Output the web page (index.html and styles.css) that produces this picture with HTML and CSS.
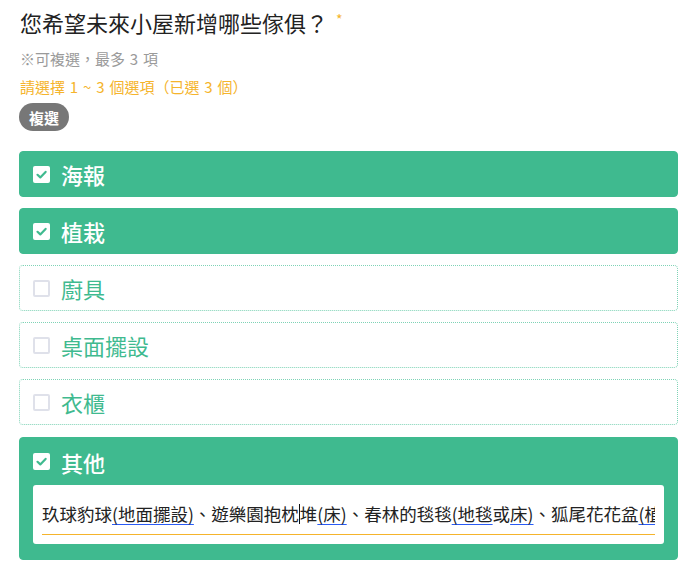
FILE: index.html
```html
<!DOCTYPE html>
<html lang="zh-Hant">
<head>
<meta charset="utf-8">
<link rel="stylesheet" href="styles.css">
</head>
<body>
<div class="question">
  <h1 class="title">您希望未來小屋新增哪些傢俱？<span class="req">*</span></h1>
  <p class="note">※可複選，最多 3 項</p>
  <p class="warn">請選擇 1 ~ 3 個選項（已選 3 個）</p>
  <span class="pill">複選</span>
  <div class="options">
    <div class="opt on">
      <span class="cb"><svg viewBox="0 0 17 17" width="17" height="17"><path d="M4.5 8.8 L7.3 11.4 L12.6 5.9" fill="none" stroke="#3fba8f" stroke-width="2.2" stroke-linecap="round" stroke-linejoin="round"/></svg></span>
      <span class="lbl">海報</span>
    </div>
    <div class="opt on">
      <span class="cb"><svg viewBox="0 0 17 17" width="17" height="17"><path d="M4.5 8.8 L7.3 11.4 L12.6 5.9" fill="none" stroke="#3fba8f" stroke-width="2.2" stroke-linecap="round" stroke-linejoin="round"/></svg></span>
      <span class="lbl">植栽</span>
    </div>
    <div class="opt">
      <span class="cb empty"></span>
      <span class="lbl">廚具</span>
    </div>
    <div class="opt">
      <span class="cb empty"></span>
      <span class="lbl">桌面擺設</span>
    </div>
    <div class="opt">
      <span class="cb empty"></span>
      <span class="lbl">衣櫃</span>
    </div>
    <div class="opt on other">
      <div class="opt-head">
        <span class="cb"><svg viewBox="0 0 17 17" width="17" height="17"><path d="M4.5 8.8 L7.3 11.4 L12.6 5.9" fill="none" stroke="#3fba8f" stroke-width="2.2" stroke-linecap="round" stroke-linejoin="round"/></svg></span>
        <span class="lbl">其他</span>
      </div>
      <div class="input-wrap">
        <div class="input"><span class="txt">玖球豹球<u>(地面擺設)</u>、遊樂園抱枕<span class="caret"></span>堆<u>(床)</u>、春林的毯毯<u>(地毯</u>或<u>床)</u>、狐尾花花盆<u>(植栽)</u></span></div>
      </div>
    </div>
  </div>
</div>
</body>
</html>
```
FILE: styles.css
```css
* { box-sizing: border-box; }
html, body { margin: 0; background: #fff; }
body {
  font-family: "Noto Sans CJK TC", "Noto Sans", sans-serif;
  padding: 7px 12px 0 19px;
}
.question { display: flex; flex-direction: column; align-items: flex-start; }
.title {
  margin: 0 0 0 1px;
  font-size: 22px;
  line-height: 30px;
  font-weight: 400;
  color: #222;
}
.req {
  color: #f5b42c;
  font-size: 14px;
  vertical-align: top;
  line-height: 24px;
  margin-left: 8px;
}
.note {
  margin: 12px 0 0 1px;
  font-size: 15px;
  line-height: 20px;
  color: #9a9a9a;
  word-spacing: 1.5px;
}
.warn {
  margin: 8px 0 0 1px;
  font-size: 15px;
  line-height: 20px;
  color: #f5b42c;
  word-spacing: 1.5px;
}
.pill {
  margin-top: 6px;
  height: 28px;
  width: 50px;
  border-radius: 14px;
  background: #777;
  color: #fff;
  font-size: 15px;
  font-weight: 700;
  display: flex;
  align-items: center;
  justify-content: center;
}
.options {
  margin-top: 20px;
  width: 659px;
  display: flex;
  flex-direction: column;
  gap: 11px;
}
.opt {
  height: 46px;
  border-radius: 4px;
  border: 1px dotted #7fd3b6;
  display: flex;
  align-items: center;
  padding-left: 13px;
  background: #fff;
}
.opt.on {
  background: #3fba8f;
  border: 1px solid #3fba8f;
}
.cb {
  width: 17px;
  height: 17px;
  border-radius: 2px;
  background: #fff;
  flex: none;
  display: block;
}
.cb svg { display: block; }
.cb.empty { border: 2px solid #dfe1ea; }
.lbl {
  margin-left: 11px;
  font-size: 22px;
  line-height: 30px;
  color: #3fba8f;
}
.opt.on .lbl { color: #fff; font-weight: 500; }
.opt.other {
  margin-top: 1px;
  height: 123px;
  flex-direction: column;
  align-items: stretch;
  padding: 0 13px 12px 13px;
}
.opt-head {
  height: 47px;
  display: flex;
  align-items: center;
}
.input-wrap {
  background: #fff;
  border-radius: 3px;
  height: 59px;
  padding: 9px 9px 0 9px;
}
.input {
  height: 41px;
  border-bottom: 1px solid #f5b42c;
  overflow: hidden;
  white-space: nowrap;
  display: flex;
  align-items: center;
}
.txt {
  font-size: 17.5px;
  line-height: 24px;
  color: #222;
}
.txt u {
  text-decoration: underline;
  text-decoration-color: #2a5bf5;
  text-underline-offset: 3px;
}
.caret {
  display: inline-block;
  width: 1px;
  height: 20px;
  background: #111;
  vertical-align: -3px;
}
```
